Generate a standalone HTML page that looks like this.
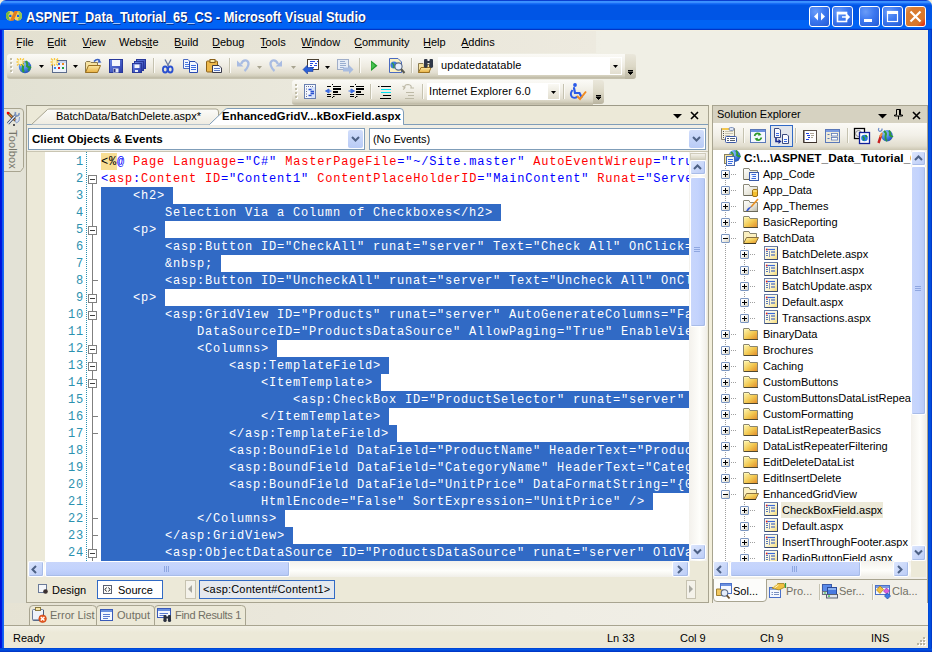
<!DOCTYPE html><html><head><meta charset='utf-8'><style>
*{margin:0;padding:0;box-sizing:border-box}
html,body{width:932px;height:652px;overflow:hidden;background:#F3EFDC}
body{position:relative;font-family:"Liberation Sans",sans-serif;font-size:11px;color:#000}
.a{position:absolute;overflow:hidden}
.t{position:absolute;white-space:pre;line-height:13px}
.code{position:absolute;left:0;font-family:"Liberation Mono",monospace;font-size:12px;letter-spacing:0.8px;white-space:pre;line-height:19px;height:17px}
svg{position:absolute;overflow:visible}
</style></head><body><div class="a" style="left:0px;top:0px;width:932px;height:30px;background:linear-gradient(to bottom,#0A3FD0 0px,#0A3FD0 1px,#3A93FF 1px,#3A93FF 2px,#3A8CFF 2px,#3A8CFF 3px,#1A6FF5 3px,#1A6FF5 4px,#0861F0 4px,#0861F0 5px,#0055E5 5px,#0055E5 6px,#0055E5 6px,#0055E5 7px,#0055E5 7px,#0055E5 8px,#0055E5 8px,#0055E5 9px,#0055E5 9px,#0055E5 10px,#0055E5 10px,#0055E5 11px,#0055E5 11px,#0055E5 12px,#0055E5 12px,#0055E5 13px,#0055E5 13px,#0055E5 14px,#0055E5 14px,#0055E5 15px,#0055E5 15px,#0055E5 16px,#0055E5 16px,#0055E5 17px,#0055E5 17px,#0055E5 18px,#0055E5 18px,#0055E5 19px,#0055E5 19px,#0055E5 20px,#0063F5 20px,#0063F5 21px,#0063F5 21px,#0063F5 22px,#0063F5 22px,#0063F5 23px,#0063F5 23px,#0063F5 24px,#0063F5 24px,#0063F5 25px,#0063F5 25px,#0063F5 26px,#0063F5 26px,#0063F5 27px,#0063F5 27px,#0063F5 28px,#0058E8 28px,#0058E8 29px,#0035C8 29px,#0035C8 30px);border-radius:6px 6px 0 0"></div>
<div class="a" style="left:0px;top:30px;width:4px;height:622px;background:linear-gradient(to right,#0010D8,#0018E0 45%,#1060F0 65%,#1A68F8)"></div>
<div class="a" style="left:928px;top:30px;width:4px;height:622px;background:linear-gradient(to right,#0040D0,#0055E5 30%,#0050E0 60%,#0030C0)"></div>
<div class="a" style="left:0px;top:648px;width:932px;height:4px;background:linear-gradient(to bottom,#0040D0,#0055E5 40%,#0030C0)"></div>
<svg style="left:0px;top:0px" width="30" height="30" viewBox="0 0 30 30"><path d="M6 15.8 Q6 11 10.5 11 Q13 11 14 13 Q15 11 17.5 11 Q22 11 22 15.8 Q22 20.7 17.5 20.7 Q15 20.7 14 18.6 Q13 20.7 10.5 20.7 Q6 20.7 6 15.8Z" fill="#F8D060"/><path d="M6 15.8 Q6 11.5 9.5 11.2 L10 13 Q8 14 8.5 16 L10 20.5 Q6 20 6 15.8Z" fill="#70B840"/><path d="M22 15.8 Q22 20 18.5 20.5 L18 18.5 Q20 17.5 19.5 15.5 L18 11.2 Q22 11.8 22 15.8Z" fill="#8CC850"/><path d="M9.8 20.7 L14.5 11 H18 L13.5 20.7Z" fill="#E07C20"/><rect x="9.2" y="14.8" width="2.2" height="2.2" fill="#0A62F0"/><rect x="17" y="14.8" width="2.2" height="2.2" fill="#0A62F0"/></svg>
<div class="t" style="left:26px;top:9px;font-weight:bold;font-size:14px;color:#fff;transform-origin:0 0;transform:scaleX(0.915);text-shadow:1px 1px 0 #0A2470;line-height:16px">ASPNET_Data_Tutorial_65_CS - Microsoft Visual Studio</div>
<div class="a" style="left:809px;top:6px;width:21px;height:21px;background:radial-gradient(circle at 30% 25%,#6A9CF8 0%,#3C78F0 45%,#2A62DC 85%,#1F52C8 100%);border:1px solid #fff;border-radius:3px"></div>
<div class="a" style="left:832px;top:6px;width:21px;height:21px;background:radial-gradient(circle at 30% 25%,#6A9CF8 0%,#3C78F0 45%,#2A62DC 85%,#1F52C8 100%);border:1px solid #fff;border-radius:3px"></div>
<div class="a" style="left:859px;top:6px;width:21px;height:21px;background:radial-gradient(circle at 30% 25%,#6A9CF8 0%,#3C78F0 45%,#2A62DC 85%,#1F52C8 100%);border:1px solid #fff;border-radius:3px"></div>
<div class="a" style="left:882px;top:6px;width:21px;height:21px;background:radial-gradient(circle at 30% 25%,#6A9CF8 0%,#3C78F0 45%,#2A62DC 85%,#1F52C8 100%);border:1px solid #fff;border-radius:3px"></div>
<div class="a" style="left:905px;top:6px;width:21px;height:21px;background:linear-gradient(135deg,#E0A070 0%,#DA7C30 20%,#D8772A 75%,#E04018 90%,#F01000 100%);border:1px solid #fff;border-radius:3px"></div>
<svg style="left:809px;top:6px" width="21" height="21" viewBox="0 0 21 21"><path d="M5 10.5 L9 6.5 V14.5Z M16 10.5 L12 6.5 V14.5Z" fill="#fff"/></svg>
<svg style="left:832px;top:6px" width="21" height="21" viewBox="0 0 21 21"><rect x="5.5" y="6.5" width="9" height="9" fill="none" stroke="#fff" stroke-width="1.6"/><rect x="5" y="6" width="10" height="2.5" fill="#fff"/><path d="M10 11 H17 M14.5 8.5 L17 11 L14.5 13.5" stroke="#fff" stroke-width="1.6" fill="none"/></svg>
<svg style="left:859px;top:6px" width="21" height="21" viewBox="0 0 21 21"><rect x="5" y="13" width="8" height="3" fill="#fff"/></svg>
<svg style="left:882px;top:6px" width="21" height="21" viewBox="0 0 21 21"><rect x="5.5" y="5.5" width="10" height="10" fill="none" stroke="#fff" stroke-width="1.2"/><rect x="5" y="5" width="11" height="3" fill="#fff"/></svg>
<svg style="left:905px;top:6px" width="21" height="21" viewBox="0 0 21 21"><path d="M5.5 5.5 L15.5 15.5 M15.5 5.5 L5.5 15.5" stroke="#fff" stroke-width="2.2"/></svg>
<div class="a" style="left:4px;top:30px;width:924px;height:75px;background:linear-gradient(to right,#E2E1D3 0px,#EAE8DC 300px,#F0EFE5 600px,#F0EFE5 924px)"></div>
<div class="a" style="left:4px;top:30px;width:592px;height:23px;background:linear-gradient(to right,#E3E0D0,#EDEADF)"></div>
<div class="a" style="left:4px;top:30px;width:924px;height:1px;background:#F4F0E0"></div>
<div class="t" style="left:16px;top:35px;line-height:14px">File</div>
<div class="t" style="left:47px;top:35px;line-height:14px">Edit</div>
<div class="t" style="left:82px;top:35px;line-height:14px">View</div>
<div class="t" style="left:119px;top:35px;line-height:14px">Website</div>
<div class="t" style="left:174px;top:35px;line-height:14px">Build</div>
<div class="t" style="left:212px;top:35px;line-height:14px">Debug</div>
<div class="t" style="left:260px;top:35px;line-height:14px">Tools</div>
<div class="t" style="left:301px;top:35px;line-height:14px">Window</div>
<div class="t" style="left:354px;top:35px;line-height:14px">Community</div>
<div class="t" style="left:423px;top:35px;line-height:14px">Help</div>
<div class="t" style="left:461px;top:35px;line-height:14px">Addins</div>
<div class="a" style="left:17px;top:47px;width:4px;height:1px;background:#000"></div>
<div class="a" style="left:48px;top:47px;width:6px;height:1px;background:#000"></div>
<div class="a" style="left:83px;top:47px;width:7px;height:1px;background:#000"></div>
<div class="a" style="left:175px;top:47px;width:7px;height:1px;background:#000"></div>
<div class="a" style="left:213px;top:47px;width:7px;height:1px;background:#000"></div>
<div class="a" style="left:261px;top:47px;width:6px;height:1px;background:#000"></div>
<div class="a" style="left:302px;top:47px;width:10px;height:1px;background:#000"></div>
<div class="a" style="left:355px;top:47px;width:7px;height:1px;background:#000"></div>
<div class="a" style="left:424px;top:47px;width:7px;height:1px;background:#000"></div>
<div class="a" style="left:462px;top:47px;width:7px;height:1px;background:#000"></div>
<div class="a" style="left:146px;top:47px;width:6px;height:1px;background:#000"></div>
<div class="a" style="left:7px;top:54px;width:618px;height:25px;background:linear-gradient(to bottom,#FBFAF6 0%,#F6F5EF 20%,#EEEBE1 50%,#E2DED0 75%,#D2CEBB 88%,#BDB8A4 96%,#CFCBB8 100%);border-radius:3px 0 0 3px"></div>
<div class="a" style="left:625px;top:54px;width:11px;height:25px;background:linear-gradient(to bottom,#EAE7DB,#DCD8C6 50%,#B9B4A0);border-radius:0 3px 3px 0"></div>
<svg style="left:628px;top:70px" width="6" height="6" viewBox="0 0 6 6"><path d="M0 0.5 H5 M0 2 H5 L2.5 4.5Z" stroke="#000" stroke-width="1" fill="#000"/></svg>
<div class="a" style="left:10px;top:58px;width:2px;height:2px;background:#C1BDA8;box-shadow:1px 1px 0 #fff"></div>
<div class="a" style="left:10px;top:62px;width:2px;height:2px;background:#C1BDA8;box-shadow:1px 1px 0 #fff"></div>
<div class="a" style="left:10px;top:66px;width:2px;height:2px;background:#C1BDA8;box-shadow:1px 1px 0 #fff"></div>
<div class="a" style="left:10px;top:70px;width:2px;height:2px;background:#C1BDA8;box-shadow:1px 1px 0 #fff"></div>
<div class="a" style="left:153px;top:58px;width:1px;height:15px;background:#C5C2B0;box-shadow:1px 0 0 #FBFAF5"></div>
<div class="a" style="left:229px;top:58px;width:1px;height:15px;background:#C5C2B0;box-shadow:1px 0 0 #FBFAF5"></div>
<div class="a" style="left:359px;top:58px;width:1px;height:15px;background:#C5C2B0;box-shadow:1px 0 0 #FBFAF5"></div>
<div class="a" style="left:411px;top:58px;width:1px;height:15px;background:#C5C2B0;box-shadow:1px 0 0 #FBFAF5"></div>
<svg style="left:39px;top:65px" width="5" height="3" viewBox="0 0 5 3"><path d="M0 0 H5 L2.5 3Z" fill="#000"/></svg>
<svg style="left:73px;top:65px" width="5" height="3" viewBox="0 0 5 3"><path d="M0 0 H5 L2.5 3Z" fill="#000"/></svg>
<svg style="left:325px;top:66px" width="5" height="3" viewBox="0 0 5 3"><path d="M0 0 H5 L2.5 3Z" fill="#000"/></svg>
<svg style="left:257px;top:66px" width="5" height="3" viewBox="0 0 5 3"><path d="M0 0 H5 L2.5 3Z" fill="#A8A490"/></svg>
<svg style="left:291px;top:66px" width="5" height="3" viewBox="0 0 5 3"><path d="M0 0 H5 L2.5 3Z" fill="#A8A490"/></svg>
<div class="a" style="left:438px;top:57px;width:184px;height:18px;background:#fff"></div>
<div class="a" style="left:610px;top:58px;width:11px;height:16px;background:linear-gradient(to bottom,#FAF9F4,#E2DECF);"></div>
<svg style="left:613px;top:65px" width="5" height="3" viewBox="0 0 5 3"><path d="M0 0 H5 L2.5 3Z" fill="#000"/></svg>
<div class="t" style="left:441px;top:59px;letter-spacing:0.1px">updatedatatable</div>
<div class="a" style="left:292px;top:80px;width:301px;height:25px;background:linear-gradient(to bottom,#FBFAF6 0%,#F6F5EF 20%,#EEEBE1 50%,#E2DED0 75%,#D2CEBB 88%,#BDB8A4 96%,#CFCBB8 100%);border-radius:3px 0 0 3px"></div>
<div class="a" style="left:593px;top:80px;width:11px;height:24px;background:linear-gradient(to bottom,#EAE7DB,#DCD8C6 50%,#B9B4A0);border-radius:0 3px 3px 0"></div>
<svg style="left:596px;top:95px" width="6" height="6" viewBox="0 0 6 6"><path d="M0 0.5 H5 M0 2 H5 L2.5 4.5Z" stroke="#000" stroke-width="1" fill="#000"/></svg>
<div class="a" style="left:295px;top:84px;width:2px;height:2px;background:#C1BDA8;box-shadow:1px 1px 0 #fff"></div>
<div class="a" style="left:295px;top:88px;width:2px;height:2px;background:#C1BDA8;box-shadow:1px 1px 0 #fff"></div>
<div class="a" style="left:295px;top:92px;width:2px;height:2px;background:#C1BDA8;box-shadow:1px 1px 0 #fff"></div>
<div class="a" style="left:295px;top:96px;width:2px;height:2px;background:#C1BDA8;box-shadow:1px 1px 0 #fff"></div>
<div class="a" style="left:370px;top:84px;width:1px;height:15px;background:#C5C2B0;box-shadow:1px 0 0 #FBFAF5"></div>
<div class="a" style="left:422px;top:84px;width:1px;height:15px;background:#C5C2B0;box-shadow:1px 0 0 #FBFAF5"></div>
<div class="a" style="left:563px;top:84px;width:1px;height:15px;background:#C5C2B0;box-shadow:1px 0 0 #FBFAF5"></div>
<div class="a" style="left:427px;top:83px;width:133px;height:17px;background:#fff"></div>
<div class="a" style="left:548px;top:84px;width:11px;height:15px;background:linear-gradient(to bottom,#FAF9F4,#E2DECF);"></div>
<svg style="left:551px;top:91px" width="5" height="3" viewBox="0 0 5 3"><path d="M0 0 H5 L2.5 3Z" fill="#000"/></svg>
<div class="t" style="left:429px;top:85px;letter-spacing:0.1px">Internet Explorer 6.0</div>
<svg style="left:0;top:0" width="932" height="110"><defs><radialGradient id="gl" cx="0.35" cy="0.3" r="0.8"><stop offset="0" stop-color="#9CC8FF"/><stop offset="0.6" stop-color="#3A78E0"/><stop offset="1" stop-color="#1E48A8"/></radialGradient><linearGradient id="fl" x1="0" y1="0" x2="0" y2="1"><stop offset="0" stop-color="#FBE9A6"/><stop offset="1" stop-color="#E8B040"/></linearGradient><linearGradient id="fp" x1="0" y1="0" x2="1" y2="1"><stop offset="0" stop-color="#6A88E8"/><stop offset="1" stop-color="#2A3AA8"/></linearGradient></defs><circle cx="25" cy="67" r="6.2" fill="url(#gl)"/><path d="M21 63 Q24 64 23 67 Q22 70 24 72 M26 61 Q28 64 27 66 Q29 68 31 67 M28 70 L30 69" stroke="#2E9A3A" stroke-width="2.2" fill="none"/><g transform="translate(20.5,62)"><path d="M-3.5 -3.5 L3.5 3.5 M3.5 -3.5 L-3.5 3.5 M0 -4 V4 M-4 0 H4" stroke="#F8C840" stroke-width="1.3"/><rect x="-2" y="-2" width="4" height="4" fill="#FFF4C0"/></g><rect x="52.5" y="60.5" width="14" height="12" fill="#EEF3FC" stroke="#5C6C8C"/><rect x="53" y="61" width="13" height="2" fill="#C8D6F0"/><rect x="58" y="63" width="2" height="2" fill="#3A6AE0"/><rect x="62" y="63" width="2" height="2" fill="#F08A20"/><rect x="54" y="67" width="2" height="2" fill="#3A8AE8"/><rect x="58" y="67" width="2" height="2" fill="#E02020"/><rect x="62" y="67" width="2" height="2" fill="#20A040"/><g transform="translate(54.5,62)"><path d="M-3.5 -3.5 L3.5 3.5 M3.5 -3.5 L-3.5 3.5 M0 -4 V4 M-4 0 H4" stroke="#F8C840" stroke-width="1.3"/><rect x="-2" y="-2" width="4" height="4" fill="#FFF4C0"/></g><path d="M85.5 72.5 V62.5 L86.5 61.5 H90 L91 62.5 H97.5 V65.5" fill="#F6E2A0" stroke="#8A7A50"/><path d="M85.5 72.5 L88.5 65.5 H100.5 L97.5 72.5Z" fill="url(#fl)" stroke="#9A7020"/><path d="M94 61.5 Q97 58 100 60.5" stroke="#3A60C0" stroke-width="1.5" fill="none"/><path d="M98.5 59 L101.5 62.5 L98 62.8Z" fill="#3A60C0"/><rect x="109.5" y="59.5" width="13" height="13" fill="url(#fp)" stroke="#28389A"/><rect x="112" y="60" width="8" height="6" fill="#F4F6FC"/><rect x="113" y="68.5" width="5.5" height="4" fill="#E8ECF8"/><rect x="113.5" y="69" width="2" height="3" fill="#283080"/><rect x="136.5" y="59.5" width="9" height="9" fill="url(#fp)" stroke="#28389A"/><rect x="134.5" y="61.5" width="9" height="9" fill="url(#fp)" stroke="#28389A"/><rect x="132.5" y="63.5" width="9" height="9" fill="url(#fp)" stroke="#28389A"/><rect x="134.5" y="64.5" width="5" height="3.5" fill="#F4F6FC"/><rect x="135" y="70" width="3" height="2" fill="#E8ECF8"/><path d="M165 59.5 L168.5 66 M171 59.5 L167.5 66" stroke="#6A7AA0" stroke-width="1.3"/><ellipse cx="165.2" cy="69.5" rx="2.3" ry="3" fill="none" stroke="#2A50D0" stroke-width="1.8"/><ellipse cx="170.3" cy="69.5" rx="2.3" ry="3" fill="none" stroke="#2A50D0" stroke-width="1.8"/><path d="M183.5 59.5 H188 L190.5 62 V68.5 H183.5Z" fill="#F4F8FF" stroke="#4A6AC0"/><path d="M185 62.5 H188 M185 64.5 H189 M185 66.5 H189" stroke="#4A7AE0"/><path d="M189.5 61.5 H195 L197.5 64 V72.5 H189.5Z" fill="#F4F8FF" stroke="#2A4AB0"/><path d="M191 65.5 H196 M191 67.5 H196 M191 69.5 H196" stroke="#3A6AE0" stroke-width="1.2"/><rect x="206.5" y="61" width="11" height="11" rx="1" fill="#EDB84A" stroke="#8A6018"/><rect x="210" y="59.5" width="5" height="3" fill="#F8E8A8" stroke="#8A6018"/><path d="M212.5 65.5 H219 L221.5 68 V72.5 H212.5Z" fill="#F4F8FF" stroke="#3A3A4A"/><path d="M214 68.5 H220 M214 70.5 H220" stroke="#5A7AC8"/><path d="M241 64 Q243 59.5 246.5 60.5 Q249.5 62 248 66 Q247 69 244.5 71" stroke="#A9BCE2" stroke-width="2.3" fill="none"/><path d="M237 60.5 L243.5 66.5 L237 66.5Z" fill="#A9BCE2"/><path d="M278 64 Q276 59.5 272.5 60.5 Q269.5 62 271 66 Q272 69 274.5 71" stroke="#A9BCE2" stroke-width="2.3" fill="none"/><path d="M282 60.5 L275.5 66.5 L282 66.5Z" fill="#A9BCE2"/><rect x="307.5" y="59.5" width="11" height="10" fill="#fff" stroke="#4A4030"/><path d="M310 61.5 H315 M317 61.5 H318 M310 63.5 H313 M315 63.5 H317 M310 65.5 H312 M314 65.5 H317 M310 67.5 H314" stroke="#2A50E0"/><path d="M303 69.5 L307.5 65 V67.5 H313 V71.5 H307.5 V74Z" fill="#2A60D8" stroke="#1A3A98" stroke-width="0.6"/><rect x="337.5" y="59.5" width="11" height="10" fill="#E6ECF6" stroke="#A0AEC8"/><path d="M340 61.5 H345 M340 63.5 H346 M340 65.5 H346 M340 67.5 H344" stroke="#9AAED0"/><path d="M353.5 69.5 L349 65 V67.5 H343 V71.5 H349 V74Z" fill="#A8BCE0"/><path d="M371 60.5 L377.5 65.8 L371 71Z" fill="#1E9A2A"/><path d="M371.5 62 L375.5 65.8 L371.5 69Z" fill="#48C050"/><path d="M389.5 58.5 H398 L401.5 62 V72.5 H389.5Z" fill="#FBF0C0" stroke="#4A6AC0"/><circle cx="394" cy="65" r="3.6" fill="#3A7AE0"/><path d="M392 63 Q395 65 393.5 68" stroke="#30A040" stroke-width="1.5" fill="none"/><circle cx="398.5" cy="66.5" r="3.6" fill="#E6EEFC" stroke="#5A6A88" stroke-width="1.1"/><path d="M401 69 L404.5 73" stroke="#5A5A50" stroke-width="2"/><path d="M418.5 72.5 V63.5 H423 L424 64.5 H429.5 V72.5Z" fill="#F6E2A0" stroke="#8A7A50"/><path d="M418.5 72.5 L421 67.5 H431 L429 72.5Z" fill="url(#fl)" stroke="#9A7020"/><rect x="424" y="59" width="3.5" height="7" rx="1" fill="#303848"/><rect x="429.5" y="59" width="3.5" height="7" rx="1" fill="#303848"/><rect x="427" y="61" width="3" height="2" fill="#303848"/><circle cx="425.7" cy="66" r="2" fill="#303848"/><circle cx="431.2" cy="66" r="2" fill="#303848"/><rect x="304.5" y="84.5" width="11" height="14" fill="#F4F8FF" stroke="#6A80B0"/><rect x="311" y="87" width="4" height="11" fill="#D6E2FA"/><path d="M306 86.5 H307 M308 86.5 H309 M310 86.5 H311 M312 86.5 H313 M306 89 H307 M306 91.5 H307 M306 94 H307 M306 96.5 H307" stroke="#6A7090"/><path d="M308.5 89.5 H311.5 M310.5 91.5 H314 M310.5 93.5 H314 M308.5 95.5 H311.5" stroke="#2A50D0" stroke-width="1.3"/><g transform="translate(325,84)"><path d="M7.5 0 V1 M7.5 13 V14" stroke="#000"/><path d="M2 2.5 H6 M8 2.5 H16 M2 10.5 H6 M8 10.5 H16 M2 12.5 H6 M8 12.5 H9.5" stroke="#000"/><path d="M8 5 H16 M8 8 H13" stroke="#000" stroke-width="2"/><path d="M6.5 7 H4 L4 5 L0.5 7 L4 9 V7" fill="#3A6AE0" stroke="#3A6AE0"/></g><g transform="translate(348,84)"><path d="M7.5 0 V1 M7.5 13 V14" stroke="#000"/><path d="M2 2.5 H6 M8 2.5 H16 M2 10.5 H6 M8 10.5 H16 M2 12.5 H6 M8 12.5 H9.5" stroke="#000"/><path d="M8 5 H16 M8 8 H13" stroke="#000" stroke-width="2"/><path d="M0.5 7 H3 L3 5 L6.5 7 L3 9 V7" fill="#3A6AE0" stroke="#3A6AE0"/></g><path d="M378 86.5 H379.5 M381 86.5 H391 M383 95.5 H391 M380 98.5 H391" stroke="#000" stroke-width="1.1"/><path d="M381 89.5 H391 M381 92.5 H391" stroke="#00E0F0" stroke-width="1.1"/><path d="M405 88 Q404 84.5 408 84.5 Q412 85 411 88 H414 M405 88 L402.5 86 M405 88 L403 89.5 M406 92.5 H414 M408 95.5 H414 M405 98.5 H414" stroke="#BDB9A6" stroke-width="1.1" fill="none"/><circle cx="575" cy="85" r="1.9" fill="#2A5AE8"/><path d="M574 88 L575 93 H579.5 L581.5 97" stroke="#2A5AE8" stroke-width="2.2" fill="none" stroke-linecap="round"/><path d="M572.5 90 Q569.5 94 572 97 Q575 99 577.5 96.5" stroke="#2A5AE8" stroke-width="1.9" fill="none"/><path d="M577 96 L580 99 L586 91.5" stroke="#F08A20" stroke-width="2" fill="none"/></svg>
<div class="a" style="left:26px;top:105px;width:683px;height:498px;background:#ECE9D8;border:1px solid #A8A490;border-top-color:#9D9A88"></div>
<div class="a" style="left:27px;top:106px;width:681px;height:19px;background:#ECE9D8"></div>
<div class="a" style="left:27px;top:124px;width:681px;height:1px;background:#7F9DB9"></div>
<svg style="left:27px;top:106px" width="200" height="20" viewBox="0 0 200 20"><defs><linearGradient id="itab" x1="0" y1="0" x2="0" y2="1"><stop offset="0" stop-color="#FCFCFA"/><stop offset="1" stop-color="#EEEBE0"/></linearGradient></defs><path d="M4.5 18.5 L20.5 3.5 Q21.5 3 23 3 H189 Q191.5 3 191.5 6 V18.5" fill="url(#itab)" stroke="#A8A490"/></svg>
<div class="t" style="left:56px;top:110px;">BatchData/BatchDelete.aspx*</div>
<svg style="left:27px;top:106px" width="380" height="20" viewBox="0 0 380 20"><path d="M182.5 18.5 L198 3.5 Q199 2.5 201 2.5 H373 Q376.5 2.5 376.5 6 V18.5" fill="#fff" stroke="#7F9DB9"/><rect x="183" y="18" width="193" height="2" fill="#fff"/></svg>
<div class="t" style="left:222px;top:110px;font-weight:bold;font-size:11.3px;letter-spacing:0.1px">EnhancedGridV...kBoxField.aspx</div>
<svg style="left:673px;top:114px" width="9" height="5" viewBox="0 0 9 5"><path d="M0 0 H9 L4.5 4.5Z" fill="#000"/></svg>
<svg style="left:690px;top:111px" width="9" height="9" viewBox="0 0 9 9"><path d="M1 1 L8 8 M8 1 L1 8" stroke="#000" stroke-width="1.6"/></svg>
<div class="a" style="left:27px;top:125px;width:681px;height:27px;background:#F0EEE5"></div>
<div class="a" style="left:28px;top:128px;width:337px;height:22px;background:#fff;border:1px solid #7F9DB9"></div>
<div class="a" style="left:348px;top:130px;width:15px;height:18px;background:linear-gradient(to bottom,#D2DEFB,#B8CBF6);border-radius:2px"></div>
<svg style="left:351px;top:136px" width="9" height="6" viewBox="0 0 9 6"><path d="M1 1 L4.5 4.5 L8 1" stroke="#4D6185" stroke-width="2" fill="none"/></svg>
<div class="t" style="left:32px;top:132px;font-weight:bold;font-size:11.6px">Client Objects &amp; Events</div>
<div class="a" style="left:369px;top:128px;width:337px;height:22px;background:#fff;border:1px solid #7F9DB9"></div>
<div class="a" style="left:689px;top:130px;width:15px;height:18px;background:linear-gradient(to bottom,#D2DEFB,#B8CBF6);border-radius:2px"></div>
<svg style="left:692px;top:136px" width="9" height="6" viewBox="0 0 9 6"><path d="M1 1 L4.5 4.5 L8 1" stroke="#4D6185" stroke-width="2" fill="none"/></svg>
<div class="t" style="left:373px;top:133px;letter-spacing:-0.1px">(No Events)</div>
<div class="a" style="left:27px;top:151px;width:681px;height:1px;background:#C9C5B2"></div>
<div class="a" style="left:28px;top:152px;width:662px;height:409px;background:#fff"></div>
<div class="a" style="left:28px;top:152px;width:17px;height:409px;background:#ECE9D8"></div>
<div class="a" style="left:86px;top:152px;width:1px;height:409px;background:repeating-linear-gradient(to bottom,#2B91AF 0,#2B91AF 1px,transparent 1px,transparent 2px)"></div>
<div class="a" style="left:28px;top:153px;width:661px;height:408px;"><div class="a" style="left:73px;top:34px;width:72px;height:17px;background:#316AC5"></div><div class="a" style="left:73px;top:51px;width:400px;height:17px;background:#316AC5"></div><div class="a" style="left:73px;top:68px;width:64px;height:17px;background:#316AC5"></div><div class="a" style="left:73px;top:85px;width:588px;height:17px;background:#316AC5"></div><div class="a" style="left:73px;top:102px;width:120px;height:17px;background:#316AC5"></div><div class="a" style="left:73px;top:119px;width:588px;height:17px;background:#316AC5"></div><div class="a" style="left:73px;top:136px;width:64px;height:17px;background:#316AC5"></div><div class="a" style="left:73px;top:153px;width:588px;height:17px;background:#316AC5"></div><div class="a" style="left:73px;top:170px;width:588px;height:17px;background:#316AC5"></div><div class="a" style="left:73px;top:187px;width:176px;height:17px;background:#316AC5"></div><div class="a" style="left:73px;top:204px;width:288px;height:17px;background:#316AC5"></div><div class="a" style="left:73px;top:221px;width:280px;height:17px;background:#316AC5"></div><div class="a" style="left:73px;top:238px;width:588px;height:17px;background:#316AC5"></div><div class="a" style="left:73px;top:255px;width:288px;height:17px;background:#316AC5"></div><div class="a" style="left:73px;top:272px;width:296px;height:17px;background:#316AC5"></div><div class="a" style="left:73px;top:289px;width:588px;height:17px;background:#316AC5"></div><div class="a" style="left:73px;top:306px;width:588px;height:17px;background:#316AC5"></div><div class="a" style="left:73px;top:323px;width:588px;height:17px;background:#316AC5"></div><div class="a" style="left:73px;top:340px;width:552px;height:17px;background:#316AC5"></div><div class="a" style="left:73px;top:357px;width:184px;height:17px;background:#316AC5"></div><div class="a" style="left:73px;top:374px;width:192px;height:17px;background:#316AC5"></div><div class="a" style="left:73px;top:391px;width:588px;height:17px;background:#316AC5"></div><div class="a" style="left:73px;top:0px;width:16px;height:17px;background:#F8DE94"></div><div class="code" style="left:73px;top:0px;"><span style="color:#000">&lt;%</span><span style="color:#0000FF">@</span> <span style="color:#FF0000">Page</span> <span style="color:#FF0000">Language</span><span style="color:#0000FF">=</span><span style="color:#0000FF">"C#"</span> <span style="color:#FF0000">MasterPageFile</span><span style="color:#0000FF">=</span><span style="color:#0000FF">"~/Site.master"</span> <span style="color:#FF0000">AutoEventWireup</span><span style="color:#0000FF">=</span><span style="color:#0000FF">"true"</span> <span style="color:#FF0000">CodeFile</span><span style="color:#0000FF">=</span><span style="color:#0000FF">"CheckBoxField.aspx.cs"</span></div><div class="code" style="left:73px;top:17px;"><span style="color:#0000FF">&lt;</span><span style="color:#FF0000">asp</span><span style="color:#0000FF">:</span><span style="color:#FF0000">Content</span> <span style="color:#FF0000">ID</span><span style="color:#0000FF">=</span><span style="color:#0000FF">"Content1"</span> <span style="color:#FF0000">ContentPlaceHolderID</span><span style="color:#0000FF">=</span><span style="color:#0000FF">"MainContent"</span> <span style="color:#FF0000">Runat</span><span style="color:#0000FF">=</span><span style="color:#0000FF">"Server"</span><span style="color:#0000FF">&gt;</span></div><div class="code" style="left:73px;top:34px;color:#fff;">    &lt;h2&gt;</div><div class="code" style="left:73px;top:51px;color:#fff;">        Selection Via a Column of Checkboxes&lt;/h2&gt;</div><div class="code" style="left:73px;top:68px;color:#fff;">    &lt;p&gt;</div><div class="code" style="left:73px;top:85px;color:#fff;">        &lt;asp:Button ID="CheckAll" runat="server" Text="Check All" OnClick="CheckAll_Click" /&gt;</div><div class="code" style="left:73px;top:102px;color:#fff;">        &amp;nbsp;</div><div class="code" style="left:73px;top:119px;color:#fff;">        &lt;asp:Button ID="UncheckAll" runat="server" Text="Uncheck All" OnClick="UncheckAll_Click" /&gt;</div><div class="code" style="left:73px;top:136px;color:#fff;">    &lt;p&gt;</div><div class="code" style="left:73px;top:153px;color:#fff;">        &lt;asp:GridView ID="Products" runat="server" AutoGenerateColumns="False" DataKeyNames="ProductID"</div><div class="code" style="left:73px;top:170px;color:#fff;">            DataSourceID="ProductsDataSource" AllowPaging="True" EnableViewState="False"&gt;</div><div class="code" style="left:73px;top:187px;color:#fff;">            &lt;Columns&gt;</div><div class="code" style="left:73px;top:204px;color:#fff;">                &lt;asp:TemplateField&gt;</div><div class="code" style="left:73px;top:221px;color:#fff;">                    &lt;ItemTemplate&gt;</div><div class="code" style="left:73px;top:238px;color:#fff;">                        &lt;asp:CheckBox ID="ProductSelector" runat="server" /&gt;</div><div class="code" style="left:73px;top:255px;color:#fff;">                    &lt;/ItemTemplate&gt;</div><div class="code" style="left:73px;top:272px;color:#fff;">                &lt;/asp:TemplateField&gt;</div><div class="code" style="left:73px;top:289px;color:#fff;">                &lt;asp:BoundField DataField="ProductName" HeaderText="Product" SortExpression="ProductName" /&gt;</div><div class="code" style="left:73px;top:306px;color:#fff;">                &lt;asp:BoundField DataField="CategoryName" HeaderText="Category" SortExpression="CategoryName" /&gt;</div><div class="code" style="left:73px;top:323px;color:#fff;">                &lt;asp:BoundField DataField="UnitPrice" DataFormatString="{0:c}" HeaderText="Price"</div><div class="code" style="left:73px;top:340px;color:#fff;">                    HtmlEncode="False" SortExpression="UnitPrice" /&gt;</div><div class="code" style="left:73px;top:357px;color:#fff;">            &lt;/Columns&gt;</div><div class="code" style="left:73px;top:374px;color:#fff;">        &lt;/asp:GridView&gt;</div><div class="code" style="left:73px;top:391px;color:#fff;">        &lt;asp:ObjectDataSource ID="ProductsDataSource" runat="server" OldValuesParameterFormatString="original_{0}"</div></div>
<div class="code" style="left:0;top:153px;width:84px;text-align:right;color:#2B91AF">1</div>
<div class="code" style="left:0;top:170px;width:84px;text-align:right;color:#2B91AF">2</div>
<div class="code" style="left:0;top:187px;width:84px;text-align:right;color:#2B91AF">3</div>
<div class="code" style="left:0;top:204px;width:84px;text-align:right;color:#2B91AF">4</div>
<div class="code" style="left:0;top:221px;width:84px;text-align:right;color:#2B91AF">5</div>
<div class="code" style="left:0;top:238px;width:84px;text-align:right;color:#2B91AF">6</div>
<div class="code" style="left:0;top:255px;width:84px;text-align:right;color:#2B91AF">7</div>
<div class="code" style="left:0;top:272px;width:84px;text-align:right;color:#2B91AF">8</div>
<div class="code" style="left:0;top:289px;width:84px;text-align:right;color:#2B91AF">9</div>
<div class="code" style="left:0;top:306px;width:84px;text-align:right;color:#2B91AF">10</div>
<div class="code" style="left:0;top:323px;width:84px;text-align:right;color:#2B91AF">11</div>
<div class="code" style="left:0;top:340px;width:84px;text-align:right;color:#2B91AF">12</div>
<div class="code" style="left:0;top:357px;width:84px;text-align:right;color:#2B91AF">13</div>
<div class="code" style="left:0;top:374px;width:84px;text-align:right;color:#2B91AF">14</div>
<div class="code" style="left:0;top:391px;width:84px;text-align:right;color:#2B91AF">15</div>
<div class="code" style="left:0;top:408px;width:84px;text-align:right;color:#2B91AF">16</div>
<div class="code" style="left:0;top:425px;width:84px;text-align:right;color:#2B91AF">17</div>
<div class="code" style="left:0;top:442px;width:84px;text-align:right;color:#2B91AF">18</div>
<div class="code" style="left:0;top:459px;width:84px;text-align:right;color:#2B91AF">19</div>
<div class="code" style="left:0;top:476px;width:84px;text-align:right;color:#2B91AF">20</div>
<div class="code" style="left:0;top:493px;width:84px;text-align:right;color:#2B91AF">21</div>
<div class="code" style="left:0;top:510px;width:84px;text-align:right;color:#2B91AF">22</div>
<div class="code" style="left:0;top:527px;width:84px;text-align:right;color:#2B91AF">23</div>
<div class="code" style="left:0;top:544px;width:84px;text-align:right;color:#2B91AF">24</div>
<div class="a" style="left:92px;top:184px;width:1px;height:377px;background:#808080"></div>
<div class="a" style="left:88px;top:175px;width:9px;height:9px;background:#fff;border:1px solid #808080"></div>
<div class="a" style="left:90px;top:179px;width:5px;height:1px;background:#404040"></div>
<div class="a" style="left:88px;top:226px;width:9px;height:9px;background:#fff;border:1px solid #808080"></div>
<div class="a" style="left:90px;top:230px;width:5px;height:1px;background:#404040"></div>
<div class="a" style="left:88px;top:294px;width:9px;height:9px;background:#fff;border:1px solid #808080"></div>
<div class="a" style="left:90px;top:298px;width:5px;height:1px;background:#404040"></div>
<div class="a" style="left:88px;top:311px;width:9px;height:9px;background:#fff;border:1px solid #808080"></div>
<div class="a" style="left:90px;top:315px;width:5px;height:1px;background:#404040"></div>
<div class="a" style="left:88px;top:345px;width:9px;height:9px;background:#fff;border:1px solid #808080"></div>
<div class="a" style="left:90px;top:349px;width:5px;height:1px;background:#404040"></div>
<div class="a" style="left:88px;top:362px;width:9px;height:9px;background:#fff;border:1px solid #808080"></div>
<div class="a" style="left:90px;top:366px;width:5px;height:1px;background:#404040"></div>
<div class="a" style="left:88px;top:379px;width:9px;height:9px;background:#fff;border:1px solid #808080"></div>
<div class="a" style="left:90px;top:383px;width:5px;height:1px;background:#404040"></div>
<div class="a" style="left:88px;top:549px;width:9px;height:9px;background:#fff;border:1px solid #808080"></div>
<div class="a" style="left:90px;top:553px;width:5px;height:1px;background:#404040"></div>
<div class="a" style="left:92px;top:280px;width:6px;height:1px;background:#808080"></div>
<div class="a" style="left:92px;top:416px;width:6px;height:1px;background:#808080"></div>
<div class="a" style="left:92px;top:433px;width:6px;height:1px;background:#808080"></div>
<div class="a" style="left:92px;top:518px;width:6px;height:1px;background:#808080"></div>
<div class="a" style="left:92px;top:535px;width:6px;height:1px;background:#808080"></div>
<div class="a" style="left:689px;top:152px;width:18px;height:409px;background:linear-gradient(to right,#F3F1EC,#FEFEFB 60%,#F0EEE8)"></div>
<div class="a" style="left:690px;top:153px;width:16px;height:7px;background:linear-gradient(to bottom,#F4F2EB,#D6D2C0);border:1px solid #D0CCBB"></div>
<div class="a" style="left:690px;top:160px;width:16px;height:15px;background:linear-gradient(135deg,#DCE6FD,#BACBF6);border:1px solid #fff;border-radius:2px;box-shadow:inset -1px -1px 0 #A8BCE8"></div>
<svg style="left:692px;top:163px" width="11" height="9" viewBox="0 0 11 9"><path d="M2 6 L5.5 2.5 L9 6" stroke="#4D6185" stroke-width="2" fill="none"/></svg>
<div class="a" style="left:690px;top:177px;width:16px;height:150px;background:linear-gradient(to right,#C8D6FB,#C3D3FD 50%,#B6C8F6);border:1px solid #fff;border-radius:2px;box-shadow:inset -1px -1px 0 #A8BCE8"></div>
<svg style="left:693px;top:247px" width="8" height="6" viewBox="0 0 8 6"><path d="M1 0.5 H7 M1 2.5 H7 M1 4.5 H7" stroke="#8EA6E0"/></svg>
<div class="a" style="left:690px;top:544px;width:16px;height:16px;background:linear-gradient(135deg,#DCE6FD,#BACBF6);border:1px solid #fff;border-radius:2px;box-shadow:inset -1px -1px 0 #A8BCE8"></div>
<svg style="left:692px;top:547px" width="11" height="9" viewBox="0 0 11 9"><path d="M2 2.5 L5.5 6 L9 2.5" stroke="#4D6185" stroke-width="2" fill="none"/></svg>
<div class="a" style="left:28px;top:561px;width:662px;height:16px;background:linear-gradient(to bottom,#F3F1EC,#FEFEFB 60%,#F0EEE8)"></div>
<div class="a" style="left:690px;top:561px;width:17px;height:16px;background:#ECE9D8"></div>
<div class="a" style="left:28px;top:561px;width:16px;height:16px;background:linear-gradient(135deg,#DCE6FD,#BACBF6);border:1px solid #fff;border-radius:2px;box-shadow:inset -1px -1px 0 #A8BCE8"></div>
<svg style="left:30px;top:564px" width="11" height="11" viewBox="0 0 11 11"><path d="M6 2 L2.5 5.5 L6 9" stroke="#4D6185" stroke-width="2" fill="none"/></svg>
<div class="a" style="left:45px;top:561px;width:245px;height:16px;background:linear-gradient(to bottom,#C8D6FB,#C3D3FD 50%,#B6C8F6);border:1px solid #fff;border-radius:2px;box-shadow:inset -1px -1px 0 #A8BCE8"></div>
<svg style="left:164px;top:565px" width="6" height="8" viewBox="0 0 6 8"><path d="M0.5 1 V7 M2.5 1 V7 M4.5 1 V7" stroke="#8EA6E0"/></svg>
<div class="a" style="left:672px;top:561px;width:17px;height:16px;background:linear-gradient(135deg,#DCE6FD,#BACBF6);border:1px solid #fff;border-radius:2px;box-shadow:inset -1px -1px 0 #A8BCE8"></div>
<svg style="left:675px;top:564px" width="11" height="11" viewBox="0 0 11 11"><path d="M3 2 L6.5 5.5 L3 9" stroke="#4D6185" stroke-width="2" fill="none"/></svg>
<div class="a" style="left:27px;top:577px;width:681px;height:25px;background:#ECE9D8"></div>
<svg style="left:38px;top:584px" width="11" height="11" viewBox="0 0 11 11"><rect x="0.5" y="0.5" width="8" height="8" fill="#F4F6FA" stroke="#6A7A98"/><circle cx="7.5" cy="7.5" r="2.3" fill="#3A3030"/></svg>
<div class="t" style="left:52px;top:584px;">Design</div>
<div class="a" style="left:97px;top:580px;width:66px;height:19px;background:#fff;border:1px solid #316AC5"></div>
<svg style="left:103px;top:585px" width="10" height="10" viewBox="0 0 10 10"><rect x="0.5" y="0.5" width="8" height="8" fill="#FAFAF8" stroke="#5A6070"/><path d="M3.5 2.5 L2 4.5 L3.5 6.5 M5.5 2.5 L7 4.5 L5.5 6.5" stroke="#202020" fill="none"/></svg>
<div class="t" style="left:118px;top:584px;">Source</div>
<div class="a" style="left:185px;top:580px;width:11px;height:19px;background:#F4F2EA;border:1px solid #C6C2B0"></div>
<svg style="left:188px;top:585px" width="4" height="8" viewBox="0 0 4 8"><path d="M4 0 L0 4 L4 8Z" fill="#A8A8A0"/></svg>
<div class="a" style="left:199px;top:580px;width:136px;height:19px;background:#E4E8EE;border:1px solid #316AC5"></div>
<div class="t" style="left:203px;top:583px;letter-spacing:0.2px">&lt;asp:Content#Content1&gt;</div>
<div class="a" style="left:686px;top:580px;width:10px;height:19px;background:#F4F2EA;border:1px solid #C6C2B0"></div>
<svg style="left:689px;top:585px" width="4" height="8" viewBox="0 0 4 8"><path d="M0 0 L4 4 L0 8Z" fill="#A8A8A0"/></svg>
<div class="a" style="left:712px;top:105px;width:216px;height:498px;background:#F1EFE8;border:1px solid #A8A490;border-bottom:none;border-left-color:#A8A490"></div>
<div class="a" style="left:713px;top:106px;width:214px;height:17px;background:#D6D2C1"></div>
<div class="t" style="left:717px;top:108px;">Solution Explorer</div>
<svg style="left:878px;top:114px" width="9" height="5" viewBox="0 0 9 5"><path d="M0 0 H9 L4.5 4.5Z" fill="#000"/></svg>
<svg style="left:894px;top:109px" width="9" height="11" viewBox="0 0 9 11"><path d="M2.5 0.5 H6.5 V6 H8.5 V7 H0.5 V6 H2.5Z M4.5 7 V10.5" stroke="#000" fill="none"/><rect x="5" y="1" width="1.5" height="5" fill="#000"/></svg>
<svg style="left:912px;top:111px" width="9" height="9" viewBox="0 0 9 9"><path d="M1 1 L8 8 M8 1 L1 8" stroke="#000" stroke-width="1.6"/></svg>
<div class="a" style="left:713px;top:123px;width:214px;height:27px;background:linear-gradient(to bottom,#FBFAF6 0%,#F2F0E8 45%,#E2DECF 85%,#CCC7B3 100%)"></div>
<div class="a" style="left:743px;top:128px;width:1px;height:15px;background:#C5C2B0;box-shadow:1px 0 0 #FBFAF5"></div>
<div class="a" style="left:795px;top:128px;width:1px;height:15px;background:#C5C2B0;box-shadow:1px 0 0 #FBFAF5"></div>
<div class="a" style="left:847px;top:128px;width:1px;height:15px;background:#C5C2B0;box-shadow:1px 0 0 #FBFAF5"></div>
<svg style="left:0;top:0" width="932" height="160"><path d="M721.5 139.5 V128.5 H734.5 V139.5Z" fill="#F6F2E2" stroke="#8A8470"/><rect x="722" y="128" width="12" height="2" fill="#F4C850"/><path d="M723 131.5 H724 M723 133.5 H724 M723 135.5 H724 M723 137.5 H724" stroke="#555"/><path d="M725 131.5 H733 M725 133.5 H733 M725 135.5 H730" stroke="#C8C4B0"/><rect x="729" y="127.5" width="5" height="3" rx="1.5" fill="#DDE6F6" stroke="#6A80B0" stroke-width="0.8"/><rect x="725.5" y="136.5" width="11" height="6" rx="1" fill="#fff" stroke="#3A58A8"/><path d="M727 138.5 H729 M730 138.5 H735 M727 140.5 H729 M730 140.5 H735" stroke="#556070"/><rect x="750.5" y="129.5" width="15" height="13" fill="#F4F8FF" stroke="#5A78B8"/><rect x="751" y="130" width="14" height="2" fill="#6A90E0"/><path d="M754.5 136 Q755.5 133 758.5 133.5 L760 134.5" stroke="#2E9A2A" stroke-width="1.6" fill="none"/><path d="M759 132.5 L761.5 135 L758 135.8Z" fill="#2E9A2A"/><path d="M761.5 137.5 Q760.5 140.5 757.5 140 L756 139" stroke="#2E9A2A" stroke-width="1.6" fill="none"/><path d="M757 141 L754.5 138.5 L758 137.8Z" fill="#2E9A2A"/><rect x="770.5" y="125.5" width="22" height="21" fill="#E2E6EC" stroke="#316AC5"/><path d="M774.5 128.5 H779 L780.5 130 V137.5 H774.5Z" fill="#F8FAFF" stroke="#3A4A80"/><path d="M776 133.5 H779 M776 135.5 H779" stroke="#3A6AE0"/><path d="M782.5 134.5 H787 L788.5 136 V143.5 H782.5Z" fill="#F8FAFF" stroke="#3A4A80"/><path d="M784 139.5 H787 M784 141.5 H787" stroke="#3A6AE0"/><path d="M776 138 V141.5 H779" stroke="#1A2A90" stroke-width="1.6" fill="none"/><path d="M778.5 139 L781.5 141.5 L778.5 144Z" fill="#1A2A90"/><rect x="803.5" y="130.5" width="13" height="12" fill="#fff" stroke="#5A5048"/><path d="M804 142.5 H817 M804 131 V142" stroke="#3A3028"/><path d="M806 133.5 H809 M807 135.5 H810 M808 137.5 H810 M806 139.5 H809" stroke="#2040E0" stroke-width="1.1"/><path d="M810 133.5 H814 M811 135.5 H814 M811 137.5 H813" stroke="#B0A898"/><rect x="825.5" y="129.5" width="14" height="13" fill="#EEEADA" stroke="#5A78B8"/><rect x="826" y="130" width="13" height="2" fill="#7A9AE0"/><path d="M827.5 134.5 H829.5 M827.5 138.5 H829.5" stroke="#5A78B8"/><rect x="831.5" y="133.5" width="6" height="2.5" fill="#fff" stroke="#5A78B8" stroke-width="0.8"/><rect x="831.5" y="137.5" width="6" height="2.5" fill="#fff" stroke="#5A78B8" stroke-width="0.8"/><rect x="854.5" y="128.5" width="10" height="10" fill="#fff" stroke="#000" stroke-width="1.3"/><circle cx="858.5" cy="133.5" r="3" fill="#EEE" stroke="#888"/><rect x="859.5" y="132.5" width="10" height="11" fill="#fff" stroke="#10209A" stroke-width="1.3"/><circle cx="864.5" cy="138" r="3.3" fill="#2A78E0"/><path d="M862.5 136.5 Q865 138 863.5 140.5 M865.5 135 L867 137" stroke="#1A9A2A" stroke-width="1.4" fill="none"/><circle cx="887" cy="135.7" r="5.8" fill="url(#gl)"/><path d="M884 131 Q887 133 885.5 136 Q885 139 887 141 M889 130.5 Q891 133 890 135 Q892 137 892.8 136" stroke="#2E9A3A" stroke-width="2" fill="none"/><path d="M878.5 143 L881 135.5" stroke="#C82020" stroke-width="2.4"/><path d="M880 137 L882 133" stroke="#F09040" stroke-width="2"/><path d="M879 128 Q877.5 130.5 880 131.5 Q882.5 131 882 128.5" stroke="#6A8AC8" stroke-width="1.2" fill="none"/></svg>
<div class="a" style="left:713px;top:150px;width:198px;height:411px;background:#fff"></div>
<svg style="left:0;top:0" width="0" height="0"><defs><linearGradient id="sfd" x1="0" y1="0" x2="1" y2="1"><stop offset="0" stop-color="#FFFAB8"/><stop offset="0.55" stop-color="#F2C850"/><stop offset="1" stop-color="#E08828"/></linearGradient><linearGradient id="sfg" x1="0" y1="0" x2="1" y2="1"><stop offset="0" stop-color="#FFFFFF"/><stop offset="0.6" stop-color="#E8E6DA"/><stop offset="1" stop-color="#B8B6A6"/></linearGradient><linearGradient id="sax" x1="0" y1="0" x2="1" y2="1"><stop offset="0" stop-color="#FFFFFF"/><stop offset="0.5" stop-color="#FDF8D8"/><stop offset="1" stop-color="#F4D870"/></linearGradient><linearGradient id="sexp" x1="0" y1="0" x2="0" y2="1"><stop offset="0" stop-color="#FFFFFF"/><stop offset="1" stop-color="#D8D4C4"/></linearGradient></defs></svg>
<div class="a" style="left:713px;top:150px;width:198px;height:411px;"><div class="a" style="left:12px;top:16px;width:1px;height:396px;background:repeating-linear-gradient(to bottom,#A0A0A0 0,#A0A0A0 1px,transparent 1px,transparent 2px)"></div><div class="a" style="left:31px;top:96px;width:1px;height:72px;background:repeating-linear-gradient(to bottom,#A0A0A0 0,#A0A0A0 1px,transparent 1px,transparent 2px)"></div><div class="a" style="left:31px;top:352px;width:1px;height:60px;background:repeating-linear-gradient(to bottom,#A0A0A0 0,#A0A0A0 1px,transparent 1px,transparent 2px)"></div><svg style="left:9px;top:0px" width="20" height="16"><circle cx="12.5" cy="6" r="6" fill="url(#gl)"/><path d="M9 2 Q12 4 10.5 7 Q10 10 12 12 M14 0.5 Q16 3 15 5 Q17 7 18.5 6" stroke="#2E9A3A" stroke-width="2" fill="none"/><rect x="2.5" y="4.5" width="8" height="9" fill="#F8E8A0" stroke="#8A8060"/><rect x="4.5" y="6.5" width="8" height="9" fill="#F4F8FF" stroke="#4A6AB0"/><path d="M6 9.5 H11 M6 11.5 H11 M6 13.5 H10" stroke="#3A6AE0"/></svg><div class="t" style="left:31px;top:2px;font-weight:bold;font-size:11.8px;letter-spacing:0.07px">C:\...\ASPNET_Data_Tutorial_65_CS\</div><div class="a" style="left:8px;top:20px;width:9px;height:9px;background:linear-gradient(135deg,#FFFFFF 30%,#D6D2C2);border:1px solid #7B96C1;border-radius:1px"></div><div class="a" style="left:10px;top:24px;width:5px;height:1px;background:#000"></div><div class="a" style="left:12px;top:22px;width:1px;height:5px;background:#000"></div><div class="a" style="left:18px;top:24px;width:6px;height:1px;background:repeating-linear-gradient(to right,#A0A0A0 0,#A0A0A0 1px,transparent 1px,transparent 2px)"></div><svg style="left:30px;top:17px" width="17" height="14"><path d="M0.5 12.5 V2 Q0.5 1.5 1 1.5 H6 L7 3.5 H14.5 V12.5Z" fill="url(#sfg)" stroke="#8A8878"/><path d="M1 12.5 H15" stroke="#6A6858"/><rect x="6.5" y="5.5" width="9" height="8" fill="#F4F8FF" stroke="#3A5AA8"/><path d="M8.5 7.5 H13 M9.5 9.5 H13 M8.5 11.5 H13" stroke="#3A6AE0"/></svg><div class="t" style="left:50px;top:18px">App_Code</div><div class="a" style="left:8px;top:36px;width:9px;height:9px;background:linear-gradient(135deg,#FFFFFF 30%,#D6D2C2);border:1px solid #7B96C1;border-radius:1px"></div><div class="a" style="left:10px;top:40px;width:5px;height:1px;background:#000"></div><div class="a" style="left:12px;top:38px;width:1px;height:5px;background:#000"></div><div class="a" style="left:18px;top:40px;width:6px;height:1px;background:repeating-linear-gradient(to right,#A0A0A0 0,#A0A0A0 1px,transparent 1px,transparent 2px)"></div><svg style="left:30px;top:33px" width="17" height="14"><path d="M0.5 12.5 V2 Q0.5 1.5 1 1.5 H6 L7 3.5 H14.5 V12.5Z" fill="url(#sfg)" stroke="#8A8878"/><path d="M1 12.5 H15" stroke="#6A6858"/><rect x="9.5" y="6.5" width="5" height="7" rx="1.5" fill="#F4C030" stroke="#A07010"/><path d="M10 8 H14" stroke="#FFF0A0"/></svg><div class="t" style="left:50px;top:34px">App_Data</div><div class="a" style="left:8px;top:52px;width:9px;height:9px;background:linear-gradient(135deg,#FFFFFF 30%,#D6D2C2);border:1px solid #7B96C1;border-radius:1px"></div><div class="a" style="left:10px;top:56px;width:5px;height:1px;background:#000"></div><div class="a" style="left:12px;top:54px;width:1px;height:5px;background:#000"></div><div class="a" style="left:18px;top:56px;width:6px;height:1px;background:repeating-linear-gradient(to right,#A0A0A0 0,#A0A0A0 1px,transparent 1px,transparent 2px)"></div><svg style="left:30px;top:49px" width="17" height="14"><path d="M0.5 12.5 V2 Q0.5 1.5 1 1.5 H6 L7 3.5 H14.5 V12.5Z" fill="url(#sfg)" stroke="#8A8878"/><path d="M1 12.5 H15" stroke="#6A6858"/><path d="M15 0 L8 8" stroke="#E89020" stroke-width="1.6"/><path d="M9 7 L5 12 L3 12 L5 9Z" fill="#3A5AD0"/></svg><div class="t" style="left:50px;top:50px">App_Themes</div><div class="a" style="left:8px;top:68px;width:9px;height:9px;background:linear-gradient(135deg,#FFFFFF 30%,#D6D2C2);border:1px solid #7B96C1;border-radius:1px"></div><div class="a" style="left:10px;top:72px;width:5px;height:1px;background:#000"></div><div class="a" style="left:12px;top:70px;width:1px;height:5px;background:#000"></div><div class="a" style="left:18px;top:72px;width:6px;height:1px;background:repeating-linear-gradient(to right,#A0A0A0 0,#A0A0A0 1px,transparent 1px,transparent 2px)"></div><svg style="left:30px;top:65px" width="17" height="14"><path d="M0.5 12.5 V2 Q0.5 1.5 1 1.5 H6 L7 3.5 H14.5 V12.5Z" fill="url(#sfd)" stroke="#8A8670"/><path d="M1 2.5 H6" stroke="#FFF6B0"/><path d="M1 12.5 H15" stroke="#504830"/></svg><div class="t" style="left:50px;top:66px">BasicReporting</div><div class="a" style="left:8px;top:84px;width:9px;height:9px;background:linear-gradient(135deg,#FFFFFF 30%,#D6D2C2);border:1px solid #7B96C1;border-radius:1px"></div><div class="a" style="left:10px;top:88px;width:5px;height:1px;background:#000"></div><div class="a" style="left:18px;top:88px;width:6px;height:1px;background:repeating-linear-gradient(to right,#A0A0A0 0,#A0A0A0 1px,transparent 1px,transparent 2px)"></div><svg style="left:30px;top:81px" width="17" height="14"><path d="M0.5 12.5 V1 Q0.5 0.5 1 0.5 H6 L7 2.5 H13.5 V6" fill="#FBF0C0" stroke="#8A8670"/><path d="M0.5 12.5 L3.5 6.5 H15.5 L12.5 12.5Z" fill="url(#sfd)" stroke="#8A7040"/><path d="M1 12.5 H13" stroke="#403820"/></svg><div class="t" style="left:50px;top:82px">BatchData</div><div class="a" style="left:27px;top:100px;width:9px;height:9px;background:linear-gradient(135deg,#FFFFFF 30%,#D6D2C2);border:1px solid #7B96C1;border-radius:1px"></div><div class="a" style="left:29px;top:104px;width:5px;height:1px;background:#000"></div><div class="a" style="left:31px;top:102px;width:1px;height:5px;background:#000"></div><div class="a" style="left:37px;top:104px;width:6px;height:1px;background:repeating-linear-gradient(to right,#A0A0A0 0,#A0A0A0 1px,transparent 1px,transparent 2px)"></div><svg style="left:51px;top:96px" width="15" height="15"><rect x="0.5" y="0.5" width="13" height="13" fill="url(#sax)" stroke="#6A7EA8"/><path d="M13.5 1 V13.5 H1" stroke="#3A4A70" fill="none"/><circle cx="2.8" cy="3.6" r="1" fill="#E02020"/><path d="M3.5 3.5 H11" stroke="#3A6AD8" stroke-width="1.2"/><path d="M2 5.5 H4 M2 7.5 H4 M2 9.5 H4" stroke="#5A78B8"/><path d="M5.5 5 V11" stroke="#8A9AC0"/><path d="M7 6 H11 M7 9 H11" stroke="#6A84C0" stroke-width="1.3"/></svg><div class="t" style="left:69px;top:98px">BatchDelete.aspx</div><div class="a" style="left:27px;top:116px;width:9px;height:9px;background:linear-gradient(135deg,#FFFFFF 30%,#D6D2C2);border:1px solid #7B96C1;border-radius:1px"></div><div class="a" style="left:29px;top:120px;width:5px;height:1px;background:#000"></div><div class="a" style="left:31px;top:118px;width:1px;height:5px;background:#000"></div><div class="a" style="left:37px;top:120px;width:6px;height:1px;background:repeating-linear-gradient(to right,#A0A0A0 0,#A0A0A0 1px,transparent 1px,transparent 2px)"></div><svg style="left:51px;top:112px" width="15" height="15"><rect x="0.5" y="0.5" width="13" height="13" fill="url(#sax)" stroke="#6A7EA8"/><path d="M13.5 1 V13.5 H1" stroke="#3A4A70" fill="none"/><circle cx="2.8" cy="3.6" r="1" fill="#E02020"/><path d="M3.5 3.5 H11" stroke="#3A6AD8" stroke-width="1.2"/><path d="M2 5.5 H4 M2 7.5 H4 M2 9.5 H4" stroke="#5A78B8"/><path d="M5.5 5 V11" stroke="#8A9AC0"/><path d="M7 6 H11 M7 9 H11" stroke="#6A84C0" stroke-width="1.3"/></svg><div class="t" style="left:69px;top:114px">BatchInsert.aspx</div><div class="a" style="left:27px;top:132px;width:9px;height:9px;background:linear-gradient(135deg,#FFFFFF 30%,#D6D2C2);border:1px solid #7B96C1;border-radius:1px"></div><div class="a" style="left:29px;top:136px;width:5px;height:1px;background:#000"></div><div class="a" style="left:31px;top:134px;width:1px;height:5px;background:#000"></div><div class="a" style="left:37px;top:136px;width:6px;height:1px;background:repeating-linear-gradient(to right,#A0A0A0 0,#A0A0A0 1px,transparent 1px,transparent 2px)"></div><svg style="left:51px;top:128px" width="15" height="15"><rect x="0.5" y="0.5" width="13" height="13" fill="url(#sax)" stroke="#6A7EA8"/><path d="M13.5 1 V13.5 H1" stroke="#3A4A70" fill="none"/><circle cx="2.8" cy="3.6" r="1" fill="#E02020"/><path d="M3.5 3.5 H11" stroke="#3A6AD8" stroke-width="1.2"/><path d="M2 5.5 H4 M2 7.5 H4 M2 9.5 H4" stroke="#5A78B8"/><path d="M5.5 5 V11" stroke="#8A9AC0"/><path d="M7 6 H11 M7 9 H11" stroke="#6A84C0" stroke-width="1.3"/></svg><div class="t" style="left:69px;top:130px">BatchUpdate.aspx</div><div class="a" style="left:27px;top:148px;width:9px;height:9px;background:linear-gradient(135deg,#FFFFFF 30%,#D6D2C2);border:1px solid #7B96C1;border-radius:1px"></div><div class="a" style="left:29px;top:152px;width:5px;height:1px;background:#000"></div><div class="a" style="left:31px;top:150px;width:1px;height:5px;background:#000"></div><div class="a" style="left:37px;top:152px;width:6px;height:1px;background:repeating-linear-gradient(to right,#A0A0A0 0,#A0A0A0 1px,transparent 1px,transparent 2px)"></div><svg style="left:51px;top:144px" width="15" height="15"><rect x="0.5" y="0.5" width="13" height="13" fill="url(#sax)" stroke="#6A7EA8"/><path d="M13.5 1 V13.5 H1" stroke="#3A4A70" fill="none"/><circle cx="2.8" cy="3.6" r="1" fill="#E02020"/><path d="M3.5 3.5 H11" stroke="#3A6AD8" stroke-width="1.2"/><path d="M2 5.5 H4 M2 7.5 H4 M2 9.5 H4" stroke="#5A78B8"/><path d="M5.5 5 V11" stroke="#8A9AC0"/><path d="M7 6 H11 M7 9 H11" stroke="#6A84C0" stroke-width="1.3"/></svg><div class="t" style="left:69px;top:146px">Default.aspx</div><div class="a" style="left:27px;top:164px;width:9px;height:9px;background:linear-gradient(135deg,#FFFFFF 30%,#D6D2C2);border:1px solid #7B96C1;border-radius:1px"></div><div class="a" style="left:29px;top:168px;width:5px;height:1px;background:#000"></div><div class="a" style="left:31px;top:166px;width:1px;height:5px;background:#000"></div><div class="a" style="left:37px;top:168px;width:6px;height:1px;background:repeating-linear-gradient(to right,#A0A0A0 0,#A0A0A0 1px,transparent 1px,transparent 2px)"></div><svg style="left:51px;top:160px" width="15" height="15"><rect x="0.5" y="0.5" width="13" height="13" fill="url(#sax)" stroke="#6A7EA8"/><path d="M13.5 1 V13.5 H1" stroke="#3A4A70" fill="none"/><circle cx="2.8" cy="3.6" r="1" fill="#E02020"/><path d="M3.5 3.5 H11" stroke="#3A6AD8" stroke-width="1.2"/><path d="M2 5.5 H4 M2 7.5 H4 M2 9.5 H4" stroke="#5A78B8"/><path d="M5.5 5 V11" stroke="#8A9AC0"/><path d="M7 6 H11 M7 9 H11" stroke="#6A84C0" stroke-width="1.3"/></svg><div class="t" style="left:69px;top:162px">Transactions.aspx</div><div class="a" style="left:8px;top:180px;width:9px;height:9px;background:linear-gradient(135deg,#FFFFFF 30%,#D6D2C2);border:1px solid #7B96C1;border-radius:1px"></div><div class="a" style="left:10px;top:184px;width:5px;height:1px;background:#000"></div><div class="a" style="left:12px;top:182px;width:1px;height:5px;background:#000"></div><div class="a" style="left:18px;top:184px;width:6px;height:1px;background:repeating-linear-gradient(to right,#A0A0A0 0,#A0A0A0 1px,transparent 1px,transparent 2px)"></div><svg style="left:30px;top:177px" width="17" height="14"><path d="M0.5 12.5 V2 Q0.5 1.5 1 1.5 H6 L7 3.5 H14.5 V12.5Z" fill="url(#sfd)" stroke="#8A8670"/><path d="M1 2.5 H6" stroke="#FFF6B0"/><path d="M1 12.5 H15" stroke="#504830"/></svg><div class="t" style="left:50px;top:178px">BinaryData</div><div class="a" style="left:8px;top:196px;width:9px;height:9px;background:linear-gradient(135deg,#FFFFFF 30%,#D6D2C2);border:1px solid #7B96C1;border-radius:1px"></div><div class="a" style="left:10px;top:200px;width:5px;height:1px;background:#000"></div><div class="a" style="left:12px;top:198px;width:1px;height:5px;background:#000"></div><div class="a" style="left:18px;top:200px;width:6px;height:1px;background:repeating-linear-gradient(to right,#A0A0A0 0,#A0A0A0 1px,transparent 1px,transparent 2px)"></div><svg style="left:30px;top:193px" width="17" height="14"><path d="M0.5 12.5 V2 Q0.5 1.5 1 1.5 H6 L7 3.5 H14.5 V12.5Z" fill="url(#sfd)" stroke="#8A8670"/><path d="M1 2.5 H6" stroke="#FFF6B0"/><path d="M1 12.5 H15" stroke="#504830"/></svg><div class="t" style="left:50px;top:194px">Brochures</div><div class="a" style="left:8px;top:212px;width:9px;height:9px;background:linear-gradient(135deg,#FFFFFF 30%,#D6D2C2);border:1px solid #7B96C1;border-radius:1px"></div><div class="a" style="left:10px;top:216px;width:5px;height:1px;background:#000"></div><div class="a" style="left:12px;top:214px;width:1px;height:5px;background:#000"></div><div class="a" style="left:18px;top:216px;width:6px;height:1px;background:repeating-linear-gradient(to right,#A0A0A0 0,#A0A0A0 1px,transparent 1px,transparent 2px)"></div><svg style="left:30px;top:209px" width="17" height="14"><path d="M0.5 12.5 V2 Q0.5 1.5 1 1.5 H6 L7 3.5 H14.5 V12.5Z" fill="url(#sfd)" stroke="#8A8670"/><path d="M1 2.5 H6" stroke="#FFF6B0"/><path d="M1 12.5 H15" stroke="#504830"/></svg><div class="t" style="left:50px;top:210px">Caching</div><div class="a" style="left:8px;top:228px;width:9px;height:9px;background:linear-gradient(135deg,#FFFFFF 30%,#D6D2C2);border:1px solid #7B96C1;border-radius:1px"></div><div class="a" style="left:10px;top:232px;width:5px;height:1px;background:#000"></div><div class="a" style="left:12px;top:230px;width:1px;height:5px;background:#000"></div><div class="a" style="left:18px;top:232px;width:6px;height:1px;background:repeating-linear-gradient(to right,#A0A0A0 0,#A0A0A0 1px,transparent 1px,transparent 2px)"></div><svg style="left:30px;top:225px" width="17" height="14"><path d="M0.5 12.5 V2 Q0.5 1.5 1 1.5 H6 L7 3.5 H14.5 V12.5Z" fill="url(#sfd)" stroke="#8A8670"/><path d="M1 2.5 H6" stroke="#FFF6B0"/><path d="M1 12.5 H15" stroke="#504830"/></svg><div class="t" style="left:50px;top:226px">CustomButtons</div><div class="a" style="left:8px;top:244px;width:9px;height:9px;background:linear-gradient(135deg,#FFFFFF 30%,#D6D2C2);border:1px solid #7B96C1;border-radius:1px"></div><div class="a" style="left:10px;top:248px;width:5px;height:1px;background:#000"></div><div class="a" style="left:12px;top:246px;width:1px;height:5px;background:#000"></div><div class="a" style="left:18px;top:248px;width:6px;height:1px;background:repeating-linear-gradient(to right,#A0A0A0 0,#A0A0A0 1px,transparent 1px,transparent 2px)"></div><svg style="left:30px;top:241px" width="17" height="14"><path d="M0.5 12.5 V2 Q0.5 1.5 1 1.5 H6 L7 3.5 H14.5 V12.5Z" fill="url(#sfd)" stroke="#8A8670"/><path d="M1 2.5 H6" stroke="#FFF6B0"/><path d="M1 12.5 H15" stroke="#504830"/></svg><div class="t" style="left:50px;top:242px">CustomButtonsDataListRepeater</div><div class="a" style="left:8px;top:260px;width:9px;height:9px;background:linear-gradient(135deg,#FFFFFF 30%,#D6D2C2);border:1px solid #7B96C1;border-radius:1px"></div><div class="a" style="left:10px;top:264px;width:5px;height:1px;background:#000"></div><div class="a" style="left:12px;top:262px;width:1px;height:5px;background:#000"></div><div class="a" style="left:18px;top:264px;width:6px;height:1px;background:repeating-linear-gradient(to right,#A0A0A0 0,#A0A0A0 1px,transparent 1px,transparent 2px)"></div><svg style="left:30px;top:257px" width="17" height="14"><path d="M0.5 12.5 V2 Q0.5 1.5 1 1.5 H6 L7 3.5 H14.5 V12.5Z" fill="url(#sfd)" stroke="#8A8670"/><path d="M1 2.5 H6" stroke="#FFF6B0"/><path d="M1 12.5 H15" stroke="#504830"/></svg><div class="t" style="left:50px;top:258px">CustomFormatting</div><div class="a" style="left:8px;top:276px;width:9px;height:9px;background:linear-gradient(135deg,#FFFFFF 30%,#D6D2C2);border:1px solid #7B96C1;border-radius:1px"></div><div class="a" style="left:10px;top:280px;width:5px;height:1px;background:#000"></div><div class="a" style="left:12px;top:278px;width:1px;height:5px;background:#000"></div><div class="a" style="left:18px;top:280px;width:6px;height:1px;background:repeating-linear-gradient(to right,#A0A0A0 0,#A0A0A0 1px,transparent 1px,transparent 2px)"></div><svg style="left:30px;top:273px" width="17" height="14"><path d="M0.5 12.5 V2 Q0.5 1.5 1 1.5 H6 L7 3.5 H14.5 V12.5Z" fill="url(#sfd)" stroke="#8A8670"/><path d="M1 2.5 H6" stroke="#FFF6B0"/><path d="M1 12.5 H15" stroke="#504830"/></svg><div class="t" style="left:50px;top:274px">DataListRepeaterBasics</div><div class="a" style="left:8px;top:292px;width:9px;height:9px;background:linear-gradient(135deg,#FFFFFF 30%,#D6D2C2);border:1px solid #7B96C1;border-radius:1px"></div><div class="a" style="left:10px;top:296px;width:5px;height:1px;background:#000"></div><div class="a" style="left:12px;top:294px;width:1px;height:5px;background:#000"></div><div class="a" style="left:18px;top:296px;width:6px;height:1px;background:repeating-linear-gradient(to right,#A0A0A0 0,#A0A0A0 1px,transparent 1px,transparent 2px)"></div><svg style="left:30px;top:289px" width="17" height="14"><path d="M0.5 12.5 V2 Q0.5 1.5 1 1.5 H6 L7 3.5 H14.5 V12.5Z" fill="url(#sfd)" stroke="#8A8670"/><path d="M1 2.5 H6" stroke="#FFF6B0"/><path d="M1 12.5 H15" stroke="#504830"/></svg><div class="t" style="left:50px;top:290px">DataListRepeaterFiltering</div><div class="a" style="left:8px;top:308px;width:9px;height:9px;background:linear-gradient(135deg,#FFFFFF 30%,#D6D2C2);border:1px solid #7B96C1;border-radius:1px"></div><div class="a" style="left:10px;top:312px;width:5px;height:1px;background:#000"></div><div class="a" style="left:12px;top:310px;width:1px;height:5px;background:#000"></div><div class="a" style="left:18px;top:312px;width:6px;height:1px;background:repeating-linear-gradient(to right,#A0A0A0 0,#A0A0A0 1px,transparent 1px,transparent 2px)"></div><svg style="left:30px;top:305px" width="17" height="14"><path d="M0.5 12.5 V2 Q0.5 1.5 1 1.5 H6 L7 3.5 H14.5 V12.5Z" fill="url(#sfd)" stroke="#8A8670"/><path d="M1 2.5 H6" stroke="#FFF6B0"/><path d="M1 12.5 H15" stroke="#504830"/></svg><div class="t" style="left:50px;top:306px">EditDeleteDataList</div><div class="a" style="left:8px;top:324px;width:9px;height:9px;background:linear-gradient(135deg,#FFFFFF 30%,#D6D2C2);border:1px solid #7B96C1;border-radius:1px"></div><div class="a" style="left:10px;top:328px;width:5px;height:1px;background:#000"></div><div class="a" style="left:12px;top:326px;width:1px;height:5px;background:#000"></div><div class="a" style="left:18px;top:328px;width:6px;height:1px;background:repeating-linear-gradient(to right,#A0A0A0 0,#A0A0A0 1px,transparent 1px,transparent 2px)"></div><svg style="left:30px;top:321px" width="17" height="14"><path d="M0.5 12.5 V2 Q0.5 1.5 1 1.5 H6 L7 3.5 H14.5 V12.5Z" fill="url(#sfd)" stroke="#8A8670"/><path d="M1 2.5 H6" stroke="#FFF6B0"/><path d="M1 12.5 H15" stroke="#504830"/></svg><div class="t" style="left:50px;top:322px">EditInsertDelete</div><div class="a" style="left:8px;top:340px;width:9px;height:9px;background:linear-gradient(135deg,#FFFFFF 30%,#D6D2C2);border:1px solid #7B96C1;border-radius:1px"></div><div class="a" style="left:10px;top:344px;width:5px;height:1px;background:#000"></div><div class="a" style="left:18px;top:344px;width:6px;height:1px;background:repeating-linear-gradient(to right,#A0A0A0 0,#A0A0A0 1px,transparent 1px,transparent 2px)"></div><svg style="left:30px;top:337px" width="17" height="14"><path d="M0.5 12.5 V1 Q0.5 0.5 1 0.5 H6 L7 2.5 H13.5 V6" fill="#FBF0C0" stroke="#8A8670"/><path d="M0.5 12.5 L3.5 6.5 H15.5 L12.5 12.5Z" fill="url(#sfd)" stroke="#8A7040"/><path d="M1 12.5 H13" stroke="#403820"/></svg><div class="t" style="left:50px;top:338px">EnhancedGridView</div><div class="a" style="left:27px;top:356px;width:9px;height:9px;background:linear-gradient(135deg,#FFFFFF 30%,#D6D2C2);border:1px solid #7B96C1;border-radius:1px"></div><div class="a" style="left:29px;top:360px;width:5px;height:1px;background:#000"></div><div class="a" style="left:31px;top:358px;width:1px;height:5px;background:#000"></div><div class="a" style="left:37px;top:360px;width:6px;height:1px;background:repeating-linear-gradient(to right,#A0A0A0 0,#A0A0A0 1px,transparent 1px,transparent 2px)"></div><svg style="left:51px;top:352px" width="15" height="15"><rect x="0.5" y="0.5" width="13" height="13" fill="url(#sax)" stroke="#6A7EA8"/><path d="M13.5 1 V13.5 H1" stroke="#3A4A70" fill="none"/><circle cx="2.8" cy="3.6" r="1" fill="#E02020"/><path d="M3.5 3.5 H11" stroke="#3A6AD8" stroke-width="1.2"/><path d="M2 5.5 H4 M2 7.5 H4 M2 9.5 H4" stroke="#5A78B8"/><path d="M5.5 5 V11" stroke="#8A9AC0"/><path d="M7 6 H11 M7 9 H11" stroke="#6A84C0" stroke-width="1.3"/></svg><div class="a" style="left:68px;top:352px;width:102px;height:16px;background:#ECE9D8"></div><div class="t" style="left:69px;top:354px">CheckBoxField.aspx</div><div class="a" style="left:27px;top:372px;width:9px;height:9px;background:linear-gradient(135deg,#FFFFFF 30%,#D6D2C2);border:1px solid #7B96C1;border-radius:1px"></div><div class="a" style="left:29px;top:376px;width:5px;height:1px;background:#000"></div><div class="a" style="left:31px;top:374px;width:1px;height:5px;background:#000"></div><div class="a" style="left:37px;top:376px;width:6px;height:1px;background:repeating-linear-gradient(to right,#A0A0A0 0,#A0A0A0 1px,transparent 1px,transparent 2px)"></div><svg style="left:51px;top:368px" width="15" height="15"><rect x="0.5" y="0.5" width="13" height="13" fill="url(#sax)" stroke="#6A7EA8"/><path d="M13.5 1 V13.5 H1" stroke="#3A4A70" fill="none"/><circle cx="2.8" cy="3.6" r="1" fill="#E02020"/><path d="M3.5 3.5 H11" stroke="#3A6AD8" stroke-width="1.2"/><path d="M2 5.5 H4 M2 7.5 H4 M2 9.5 H4" stroke="#5A78B8"/><path d="M5.5 5 V11" stroke="#8A9AC0"/><path d="M7 6 H11 M7 9 H11" stroke="#6A84C0" stroke-width="1.3"/></svg><div class="t" style="left:69px;top:370px">Default.aspx</div><div class="a" style="left:27px;top:388px;width:9px;height:9px;background:linear-gradient(135deg,#FFFFFF 30%,#D6D2C2);border:1px solid #7B96C1;border-radius:1px"></div><div class="a" style="left:29px;top:392px;width:5px;height:1px;background:#000"></div><div class="a" style="left:31px;top:390px;width:1px;height:5px;background:#000"></div><div class="a" style="left:37px;top:392px;width:6px;height:1px;background:repeating-linear-gradient(to right,#A0A0A0 0,#A0A0A0 1px,transparent 1px,transparent 2px)"></div><svg style="left:51px;top:384px" width="15" height="15"><rect x="0.5" y="0.5" width="13" height="13" fill="url(#sax)" stroke="#6A7EA8"/><path d="M13.5 1 V13.5 H1" stroke="#3A4A70" fill="none"/><circle cx="2.8" cy="3.6" r="1" fill="#E02020"/><path d="M3.5 3.5 H11" stroke="#3A6AD8" stroke-width="1.2"/><path d="M2 5.5 H4 M2 7.5 H4 M2 9.5 H4" stroke="#5A78B8"/><path d="M5.5 5 V11" stroke="#8A9AC0"/><path d="M7 6 H11 M7 9 H11" stroke="#6A84C0" stroke-width="1.3"/></svg><div class="t" style="left:69px;top:386px">InsertThroughFooter.aspx</div><div class="a" style="left:27px;top:404px;width:9px;height:9px;background:linear-gradient(135deg,#FFFFFF 30%,#D6D2C2);border:1px solid #7B96C1;border-radius:1px"></div><div class="a" style="left:29px;top:408px;width:5px;height:1px;background:#000"></div><div class="a" style="left:31px;top:406px;width:1px;height:5px;background:#000"></div><div class="a" style="left:37px;top:408px;width:6px;height:1px;background:repeating-linear-gradient(to right,#A0A0A0 0,#A0A0A0 1px,transparent 1px,transparent 2px)"></div><svg style="left:51px;top:400px" width="15" height="15"><rect x="0.5" y="0.5" width="13" height="13" fill="url(#sax)" stroke="#6A7EA8"/><path d="M13.5 1 V13.5 H1" stroke="#3A4A70" fill="none"/><circle cx="2.8" cy="3.6" r="1" fill="#E02020"/><path d="M3.5 3.5 H11" stroke="#3A6AD8" stroke-width="1.2"/><path d="M2 5.5 H4 M2 7.5 H4 M2 9.5 H4" stroke="#5A78B8"/><path d="M5.5 5 V11" stroke="#8A9AC0"/><path d="M7 6 H11 M7 9 H11" stroke="#6A84C0" stroke-width="1.3"/></svg><div class="t" style="left:69px;top:402px">RadioButtonField.aspx</div></div>
<div class="a" style="left:911px;top:150px;width:15px;height:411px;background:linear-gradient(to right,#F3F1EC,#FEFEFB 60%,#F0EEE8)"></div>
<div class="a" style="left:911px;top:151px;width:15px;height:15px;background:linear-gradient(135deg,#DCE6FD,#BACBF6);border:1px solid #fff;border-radius:2px;box-shadow:inset -1px -1px 0 #A8BCE8"></div>
<svg style="left:913px;top:154px" width="11" height="9" viewBox="0 0 11 9"><path d="M2 6 L5.5 2.5 L9 6" stroke="#4D6185" stroke-width="2" fill="none"/></svg>
<div class="a" style="left:911px;top:166px;width:15px;height:249px;background:linear-gradient(to right,#C8D6FB,#C3D3FD 50%,#B6C8F6);border:1px solid #fff;border-radius:2px;box-shadow:inset -1px -1px 0 #A8BCE8"></div>
<svg style="left:914px;top:286px" width="8" height="6" viewBox="0 0 8 6"><path d="M1 0.5 H7 M1 2.5 H7 M1 4.5 H7" stroke="#8EA6E0"/></svg>
<div class="a" style="left:911px;top:545px;width:15px;height:16px;background:linear-gradient(135deg,#DCE6FD,#BACBF6);border:1px solid #fff;border-radius:2px;box-shadow:inset -1px -1px 0 #A8BCE8"></div>
<svg style="left:913px;top:548px" width="11" height="9" viewBox="0 0 11 9"><path d="M2 2.5 L5.5 6 L9 2.5" stroke="#4D6185" stroke-width="2" fill="none"/></svg>
<div class="a" style="left:713px;top:561px;width:198px;height:16px;background:linear-gradient(to bottom,#F3F1EC,#FEFEFB 60%,#F0EEE8)"></div>
<div class="a" style="left:911px;top:561px;width:15px;height:16px;background:#ECE9D8"></div>
<div class="a" style="left:713px;top:561px;width:16px;height:16px;background:linear-gradient(135deg,#DCE6FD,#BACBF6);border:1px solid #fff;border-radius:2px;box-shadow:inset -1px -1px 0 #A8BCE8"></div>
<svg style="left:715px;top:564px" width="11" height="11" viewBox="0 0 11 11"><path d="M6 2 L2.5 5.5 L6 9" stroke="#4D6185" stroke-width="2" fill="none"/></svg>
<div class="a" style="left:730px;top:561px;width:131px;height:16px;background:linear-gradient(to bottom,#C8D6FB,#C3D3FD 50%,#B6C8F6);border:1px solid #fff;border-radius:2px;box-shadow:inset -1px -1px 0 #A8BCE8"></div>
<svg style="left:792px;top:565px" width="6" height="8" viewBox="0 0 6 8"><path d="M0.5 1 V7 M2.5 1 V7 M4.5 1 V7" stroke="#8EA6E0"/></svg>
<div class="a" style="left:893px;top:561px;width:16px;height:16px;background:linear-gradient(135deg,#DCE6FD,#BACBF6);border:1px solid #fff;border-radius:2px;box-shadow:inset -1px -1px 0 #A8BCE8"></div>
<svg style="left:895px;top:564px" width="11" height="11" viewBox="0 0 11 11"><path d="M3 2 L6.5 5.5 L3 9" stroke="#4D6185" stroke-width="2" fill="none"/></svg>
<div class="a" style="left:713px;top:577px;width:214px;height:25px;background:#F1EFE8"></div>
<div class="a" style="left:713px;top:579px;width:214px;height:1px;background:#A8A490"></div>
<svg style="left:713px;top:579px" width="55" height="24" viewBox="0 0 55 24"><path d="M0.5 0 V19 Q0.5 22.5 4 22.5 H50 Q53.5 22.5 53.5 19 V0" fill="#FCFCFA" stroke="#A8A490"/></svg>
<svg style="left:712px;top:578px" width="20" height="24" viewBox="0 0 20 24"><rect x="8.5" y="5.5" width="11" height="10" fill="#F4F8FF" stroke="#4A70C8"/><rect x="9" y="6" width="10" height="2" fill="#6A90E0"/><path d="M4.5 17.5 V11 H8 L9 12 H13.5 V17.5Z" fill="#F2C860" stroke="#A08030"/><circle cx="12.5" cy="15" r="3.3" fill="#E6EEFA" stroke="#5A6A88" stroke-width="1.1"/><path d="M14.8 17.3 L17.5 20.5" stroke="#6A5030" stroke-width="1.8"/></svg>
<div class="t" style="left:733px;top:585px;">Sol...</div>
<svg style="left:768px;top:578px" width="20" height="24" viewBox="0 0 20 24"><rect x="1.5" y="9.5" width="11" height="10" fill="#F4F8FF" stroke="#4A70C8"/><rect x="2" y="10" width="10" height="2" fill="#8AA8E0"/><path d="M3.5 14.5 H5 M6 14.5 H11 M3.5 16.5 H5 M6 16.5 H11" stroke="#7A90C0"/><path d="M4 10 L10 5.5 H16 L17 9 L11 12Z" fill="#F0C040" stroke="#A08020" stroke-width="0.8"/><path d="M5 9 L9 6 M6.5 10 L10.5 7" stroke="#FFF4C0"/><path d="M17.5 5 V10" stroke="#30A040" stroke-width="1.2"/></svg>
<div class="t" style="left:786px;top:585px;color:#716F64">Pro...</div>
<div class="a" style="left:819px;top:584px;width:1px;height:16px;background:#C5C2B0;box-shadow:1px 0 0 #FBFAF5"></div>
<svg style="left:820px;top:580px" width="20" height="22" viewBox="0 0 20 22"><rect x="2.5" y="4.5" width="9" height="7" fill="#5A8AE8" stroke="#3A5AA8"/><rect x="2.5" y="11.5" width="9" height="3" fill="#D8DCE4" stroke="#6A7080"/><rect x="4" y="12.5" width="2" height="1" fill="#30C040"/><rect x="7.5" y="7.5" width="9" height="7" fill="#4A7AE0" stroke="#2A4A98"/><rect x="8" y="8" width="8" height="2" fill="#8AB0F0"/><rect x="6.5" y="14.5" width="11" height="3.5" fill="#E0E4EC" stroke="#5A6070"/><rect x="8" y="15.5" width="2" height="1.2" fill="#30C040"/></svg>
<div class="t" style="left:839px;top:585px;color:#716F64">Ser...</div>
<div class="a" style="left:872px;top:584px;width:1px;height:16px;background:#C5C2B0;box-shadow:1px 0 0 #FBFAF5"></div>
<svg style="left:872px;top:580px" width="22" height="22" viewBox="0 0 22 22"><rect x="3.5" y="5.5" width="14" height="9" fill="#F4F8FF" stroke="#4A70C8"/><rect x="4" y="6" width="13" height="2" fill="#7A9AE0"/><path d="M4.5 10 L8 6 L11.5 9.5 L8 13.5Z" fill="#F2C040" stroke="#B08010" stroke-width="0.7"/><path d="M11.5 11 L14.5 8 L17.5 11 L14.5 14Z" fill="#D860E0" stroke="#9A30A0" stroke-width="0.7"/><path d="M12.5 16 L15.5 13 L18.5 16 L15.5 19Z" fill="#3A7AE8" stroke="#2A4AA0" stroke-width="0.7"/></svg>
<div class="t" style="left:892px;top:585px;color:#716F64">Cla...</div>
<div class="a" style="left:4px;top:105px;width:22px;height:520px;background:#E3E2D6"></div>
<svg style="left:4px;top:108px" width="21" height="66" viewBox="0 0 21 66"><path d="M0 0.5 H16 Q19.5 0.5 19.5 4 V59.5 L16.5 63.5 H0" fill="#E6E5D9" stroke="#A8A490"/></svg>
<svg style="left:0px;top:100px" width="30" height="30" viewBox="0 0 30 30"><g transform="translate(0,-100)"><path d="M8 113 L15.5 120.5" stroke="#3A3020" stroke-width="2.6"/><path d="M8 113 L15.5 120.5" stroke="#E08838" stroke-width="1.4"/><circle cx="8" cy="113" r="1.3" fill="#F00000"/><path d="M8 123.5 L16 115" stroke="#2A3A5A" stroke-width="2.6"/><path d="M8 123.5 L16 115" stroke="#E8F0FF" stroke-width="1.2"/><path d="M15.5 112 Q14.5 115 17 116 Q19.5 115.5 19 113" stroke="#7A94C0" stroke-width="1.6" fill="none"/><path d="M19.5 117 Q20 122 16.5 123 Q14.5 121 16 119" fill="#D8E2F4" stroke="#8AA0C8"/><rect x="13" y="124" width="2" height="2" fill="#555"/></g></svg>
<div class="t" style="left:19px;top:130px;transform-origin:0 0;transform:rotate(90deg);color:#77766A;letter-spacing:0.15px">Toolbox</div>
<div class="a" style="left:4px;top:603px;width:924px;height:22px;background:linear-gradient(to right,#E6E3D4 0%,#EAE7DB 30%,#EFEDE4 60%,#F1EFE7 80%,#F1EFE7 100%)"></div>
<svg style="left:29px;top:603px" width="68" height="23" viewBox="0 0 68 23"><path d="M0.5 22 V6 Q0.5 2.5 4 2.5 H63.5 Q67.5 2.5 67.5 6 V22" fill="#ECE9D8" stroke="#A8A490"/></svg>
<svg style="left:96px;top:603px" width="59" height="23" viewBox="0 0 59 23"><path d="M0.5 22 V6 Q0.5 2.5 4 2.5 H54.5 Q58.5 2.5 58.5 6 V22" fill="#ECE9D8" stroke="#A8A490"/></svg>
<svg style="left:154px;top:603px" width="92" height="23" viewBox="0 0 92 23"><path d="M0.5 22 V6 Q0.5 2.5 4 2.5 H87.5 Q91.5 2.5 91.5 6 V22" fill="#ECE9D8" stroke="#A8A490"/></svg>
<svg style="left:26px;top:602px" width="24" height="24" viewBox="0 0 24 24"><rect x="6.5" y="7.5" width="11" height="11" rx="1" fill="#EEF2FA" stroke="#6A7A9A"/><path d="M7 18 H17.5 V8" stroke="#4A5A7A" fill="none"/><rect x="9.5" y="5.5" width="5" height="3" fill="#F6E6A8" stroke="#8A7A40"/><circle cx="16.6" cy="16.7" r="3.8" fill="#E85A20" stroke="#C03A10" stroke-width="0.6"/><path d="M14.8 14.9 L18.4 18.5 M18.4 14.9 L14.8 18.5" stroke="#fff" stroke-width="1.4"/></svg>
<div class="t" style="left:50px;top:609px;color:#716F64">Error List</div>
<svg style="left:99px;top:608px" width="16" height="16" viewBox="0 0 16 16"><rect x="1.5" y="1.5" width="12" height="11" fill="#F4F8FF" stroke="#3A5AB8"/><rect x="2" y="2" width="11" height="2" fill="#6A90E0"/><path d="M4 6.5 H11 M4 8.5 H11 M4 10.5 H9" stroke="#5A7AD0"/></svg>
<div class="t" style="left:117px;top:609px;color:#716F64">Output</div>
<svg style="left:154px;top:604px" width="22" height="20" viewBox="0 0 22 20"><rect x="3.5" y="4.5" width="13" height="9" fill="#F4F8FF" stroke="#3A5AB8"/><rect x="4" y="5" width="12" height="2" fill="#6A90E0"/><path d="M5.5 9.5 H14 M5.5 11.5 H10" stroke="#5A7AD0"/><rect x="9.5" y="11" width="3" height="6" rx="1" fill="#2A3040"/><rect x="14" y="11" width="3" height="6" rx="1" fill="#2A3040"/><rect x="12" y="12.5" width="2.5" height="2" fill="#2A3040"/><circle cx="11" cy="16.5" r="1.6" fill="#2A3040"/><circle cx="15.5" cy="16.5" r="1.6" fill="#2A3040"/></svg>
<div class="t" style="left:175px;top:609px;color:#716F64;letter-spacing:-0.3px">Find Results 1</div>
<div class="a" style="left:4px;top:626px;width:924px;height:22px;background:linear-gradient(to bottom,#F2F0E6,#ECE9D8 30%,#ECE9D8)"></div>
<div class="a" style="left:4px;top:625px;width:924px;height:1px;background:#A8A490"></div>
<div class="t" style="left:13px;top:631px;line-height:14px">Ready</div>
<div class="t" style="left:607px;top:631px;line-height:14px">Ln 33</div>
<div class="t" style="left:680px;top:631px;line-height:14px">Col 9</div>
<div class="t" style="left:760px;top:631px;line-height:14px">Ch 9</div>
<div class="t" style="left:871px;top:631px;line-height:14px">INS</div>
<div class="a" style="left:923px;top:637px;width:2px;height:2px;background:#B8B4A0;box-shadow:1px 1px 0 #fff"></div>
<div class="a" style="left:920px;top:640px;width:2px;height:2px;background:#B8B4A0;box-shadow:1px 1px 0 #fff"></div>
<div class="a" style="left:923px;top:640px;width:2px;height:2px;background:#B8B4A0;box-shadow:1px 1px 0 #fff"></div>
<div class="a" style="left:917px;top:643px;width:2px;height:2px;background:#B8B4A0;box-shadow:1px 1px 0 #fff"></div>
<div class="a" style="left:920px;top:643px;width:2px;height:2px;background:#B8B4A0;box-shadow:1px 1px 0 #fff"></div>
<div class="a" style="left:923px;top:643px;width:2px;height:2px;background:#B8B4A0;box-shadow:1px 1px 0 #fff"></div></body></html>
